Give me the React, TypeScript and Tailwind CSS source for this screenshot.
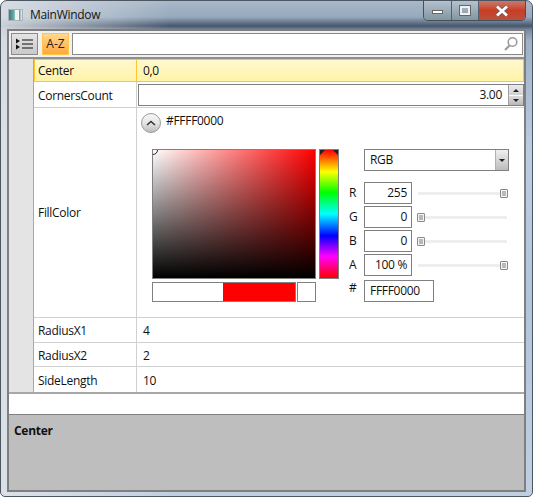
const rows = [
  { label: "R", value: "255", pos: "end" },
  { label: "G", value: "0", pos: "start" },
  { label: "B", value: "0", pos: "start" },
  { label: "A", value: "100 %", pos: "end" },
];

function Thumb() {
  return (
    <div className="w-[8px] h-[9px] border border-[#8a8a8a] rounded-[1px] bg-[#f4f4f4] flex items-center justify-center">
      <div className="w-[4px] h-[5px] bg-[#b9b9b9]" />
    </div>
  );
}

function Slider({ pos }: { pos: string }) {
  return (
    <div className={`relative w-[91px] h-[11px] flex items-center ${pos === "end" ? "justify-end" : "justify-start"}`}>
      <div className="absolute h-[3px] bg-[#eeeeee] left-[1px] right-[1px]" />
      <div className="relative"><Thumb /></div>
    </div>
  );
}

function ColorPicker() {
  return (
    <div className="pt-[5px] h-full">
      <div className="flex items-center h-[20px] ml-[4px]">
        <div className="w-[20px] h-[20px] rounded-full border border-[#9a9a9a] bg-gradient-to-b from-[#f5f5f5] via-[#e6e6e6] to-[#bdbdbd] flex items-center justify-center">
          <svg width="12" height="8" viewBox="0 0 12 8"><path d="M2 6 L6 2.5 L10 6" fill="none" stroke="#333" strokeWidth="1.6" /></svg>
        </div>
        <span className="ml-[5px] -mt-[4px]">#FFFF0000</span>
      </div>
      <div className="flex mt-[16px] ml-[15px]">
        <div className="w-[164px]">
          <div className="relative w-[164px] h-[130px] border border-[#808080] overflow-hidden bg-[linear-gradient(to_bottom,rgba(0,0,0,0),#000),linear-gradient(to_right,#fff,#f00)]">
            <div className="absolute -left-[5px] -top-[5px] w-[10px] h-[10px] rounded-full border border-[#222]" />
          </div>
          <div className="flex mt-[3px] h-[20px]">
            <div className="w-[144px] h-[20px] border border-[#808080] flex">
              <div className="w-[70px] bg-white" />
              <div className="flex-1 bg-[#ff0000]" />
            </div>
            <div className="ml-[1px] w-[19px] h-[20px] border border-[#808080] bg-white" />
          </div>
        </div>
        <div className="relative ml-[3px] w-[20px] h-[130px] border border-[#808080] bg-[linear-gradient(to_bottom,#f00,#ff0_17%,#0f0_33%,#0ff_50%,#00f_67%,#f0f_83%,#f00)]">
          <div className="absolute left-0 top-0 w-0 h-0 border-t-[5px] border-r-[5px] border-t-[#222] border-r-transparent" />
          <div className="absolute right-0 top-0 w-0 h-0 border-t-[5px] border-l-[5px] border-t-[#222] border-l-transparent" />
        </div>
        <div className="ml-[10px] w-[160px]">
          <div className="ml-[15px] w-[145px] h-[22px] border border-[#808080] flex items-center justify-between pl-[5px]">
            <span>RGB</span>
            <div className="w-[13px] h-[20px] border-l border-[#b0b0b0] bg-gradient-to-b from-[#f0f0f0] to-[#bcbcbc] flex items-center justify-center">
              <div className="w-0 h-0 border-l-[3px] border-r-[3px] border-t-[3px] border-l-transparent border-r-transparent border-t-[#222]" />
            </div>
          </div>
          <div className="mt-[11px] flex flex-col gap-[2px]">
            {rows.map((r) => (
              <div key={r.label} className="flex items-center h-[22px]">
                <span className="w-[15px]">{r.label}</span>
                <div className="w-[48px] h-[22px] border border-[#808080] flex items-center justify-end pr-[4px]">{r.value}</div>
                <div className="ml-[5px]"><Slider pos={r.pos} /></div>
              </div>
            ))}
          </div>
          <div className="flex items-center h-[22px] mt-[4px]">
            <span className="w-[15px] -mt-[6px]">#</span>
            <div className="w-[70px] h-[22px] border border-[#808080] flex items-center pl-[5px]">FFFF0000</div>
          </div>
        </div>
      </div>
    </div>
  );
}

function Row({ name, children, className = "" }: { name: string; children?: React.ReactNode; className?: string }) {
  return (
    <div className={`flex border-b border-[#d0d0d0] h-[25px] ${className}`}>
      <div className="w-[103px] border-r border-[#d0d0d0] flex items-center pl-[4px] pt-[2px] shrink-0">{name}</div>
      <div className="flex-1 flex items-center pl-[6px] pt-[2px] min-w-0">{children}</div>
    </div>
  );
}

export default function App() {
  return (
    <div
      className="w-[533px] h-[499px] bg-white text-[12px] leading-[16px] tracking-[-0.3px] text-[#111] overflow-hidden"
      style={{ fontFamily: '"Open Sans", "Noto Sans", sans-serif' }}
    >
      <div className="h-[497px] flex flex-col rounded-t-[7px] rounded-b-[5px] border border-[#4c5660] bg-[linear-gradient(to_right,rgba(225,228,232,0.85),rgba(225,228,232,0)_170px),linear-gradient(to_bottom,#a9b8ca_0,#97a9bd_16px,#46566c_25px,#7c8a9c_29px,#9fb1c6_40px,#bccde0_150px,#b3c5da_300px,#c0d0e2_497px)]">
        <div className="h-[28px] shrink-0 flex items-start justify-between">
          <div className="flex items-center h-[28px] pl-[7px]">
            <div className="w-[15px] h-[12px] border border-[#aab2b8] bg-[linear-gradient(to_right,#39798c_0,#6fb0ac_40%,#e8f2ee_50%,#f4f7f6_75%,#7c98a0_80%,#f0f4f4_100%)]" />
            <span className="ml-[7px] text-[#141414]">MainWindow</span>
          </div>
          <div className="flex h-[20px] mr-[6px] border border-t-0 border-[#44505c] rounded-b-[5px] overflow-hidden">
            <div className="w-[28px] bg-gradient-to-b from-[#b4c2d0] to-[#84969f] border-r border-[#55626e] flex items-center justify-center pt-[3px]">
              <div className="w-[11px] h-[4px] bg-white border border-[#666]" />
            </div>
            <div className="w-[27px] bg-gradient-to-b from-[#b4c2d0] to-[#84969f] border-r border-[#55626e] flex items-center justify-center">
              <div className="w-[10px] h-[9px] border-2 border-[#eef1f4] outline outline-1 outline-[#666]" />
            </div>
            <div className="w-[46px] bg-gradient-to-b from-[#c9796b] via-[#c83c22] to-[#b9503c] flex items-center justify-center">
              <svg width="14" height="12" viewBox="0 0 14 12"><path d="M2 1.5 L12 10.5 M12 1.5 L2 10.5" stroke="#666" strokeWidth="4" /><path d="M2 1.5 L12 10.5 M12 1.5 L2 10.5" stroke="#fff" strokeWidth="2.6" /></svg>
            </div>
          </div>
        </div>
        <div className="mx-[6px] h-[463px] shrink-0 border-2 border-[#7f7f7f] bg-[#f0f0f0] flex flex-col">
          <div className="h-[26px] shrink-0 flex items-center pl-[2px] pr-[1px] bg-[#f0f0f0]">
            <div className="w-[27px] h-[22px] border border-[#8a8a8a] bg-gradient-to-b from-[#e4e4e4] to-[#c9c9c9] flex items-center justify-center">
              <svg width="19" height="12" viewBox="0 0 19 12">
                <path d="M1 0.5 L5 3 L1 5.5 Z M1 6.5 L5 9 L1 11.5 Z" fill="#111" />
                <path d="M7 2 H18 M7 6 H18 M7 10 H18" stroke="#111" strokeWidth="1.2" />
              </svg>
            </div>
            <div className="ml-[4px] w-[27px] h-[22px] border border-[#ffc64a] bg-gradient-to-b from-[#ffd98c] to-[#ffa838] flex items-center justify-center text-[#222] tracking-[0px]">A-Z</div>
            <div className="ml-[3px] flex-1 h-[22px] border border-[#8a8a8a] bg-white flex items-center justify-end pr-[3px]">
              <svg width="16" height="16" viewBox="0 0 16 16"><circle cx="9.5" cy="6" r="4.3" fill="none" stroke="#9a9a9a" strokeWidth="1.6" /><path d="M6.5 9.5 L2 14" stroke="#9a9a9a" strokeWidth="2.2" /></svg>
            </div>
          </div>
          <div className="flex-1 flex flex-col min-h-0 bg-white">
            <div className="h-[337px] shrink-0 flex border-t-2 border-b-2 border-t-[#8f8f8f] border-b-[#a8a8a8]">
              <div className="w-[25px] shrink-0 bg-[#e4e4e4] border-r border-[#a8a8a8]" />
              <div className="flex-1 min-w-0 flex flex-col">
                <div className="flex h-[23px] shrink-0 border border-[#ffc42e] bg-gradient-to-b from-[#fff8cf] to-[#fff3a6]">
                  <div className="w-[102px] border-r border-[#ffc42e] flex items-center pl-[3px] shrink-0">Center</div>
                  <div className="flex-1 flex items-center pl-[6px]">0,0</div>
                </div>
                <div className="flex shrink-0 border-b border-[#d0d0d0] h-[26px]">
                  <div className="w-[103px] border-r border-[#d0d0d0] flex items-center pl-[4px] pt-[2px] shrink-0">CornersCount</div>
                  <div className="flex-1 pt-[2px] min-w-0">
                    <div className="h-[22px] border border-[#808080] flex items-center justify-end ml-[1px]">
                      <span className="pr-[6px]">3.00</span>
                      <div className="w-[15px] h-[20px] border-l border-[#a0a0a0] flex flex-col gap-[1px] bg-white">
                        <div className="h-[10px] bg-gradient-to-b from-[#ececec] to-[#d0d0d0] flex items-center justify-center"><div className="w-0 h-0 border-l-[3px] border-r-[3px] border-b-[3px] border-l-transparent border-r-transparent border-b-[#222]" /></div>
                        <div className="h-[9px] bg-gradient-to-b from-[#dcdcdc] to-[#b8b8b8] flex items-center justify-center"><div className="w-0 h-0 border-l-[3px] border-r-[3px] border-t-[3px] border-l-transparent border-r-transparent border-t-[#222]" /></div>
                      </div>
                    </div>
                  </div>
                </div>
                <div className="flex shrink-0 border-b border-[#d0d0d0] h-[210px]">
                  <div className="w-[103px] border-r border-[#d0d0d0] flex items-center pl-[4px] shrink-0">FillColor</div>
                  <div className="flex-1 min-w-0"><ColorPicker /></div>
                </div>
                <Row name="RadiusX1">4</Row>
                <Row name="RadiusX2">2</Row>
                <Row name="SideLength" className="border-b-0 h-[24px]">10</Row>
              </div>
            </div>
            <div className="h-[21px] shrink-0 bg-white border-b border-[#808080]" />
            <div className="flex-1 bg-[#bebebe] pl-[5px] pt-[8px] font-bold">Center</div>
          </div>
        </div>
      </div>
    </div>
  );
}
